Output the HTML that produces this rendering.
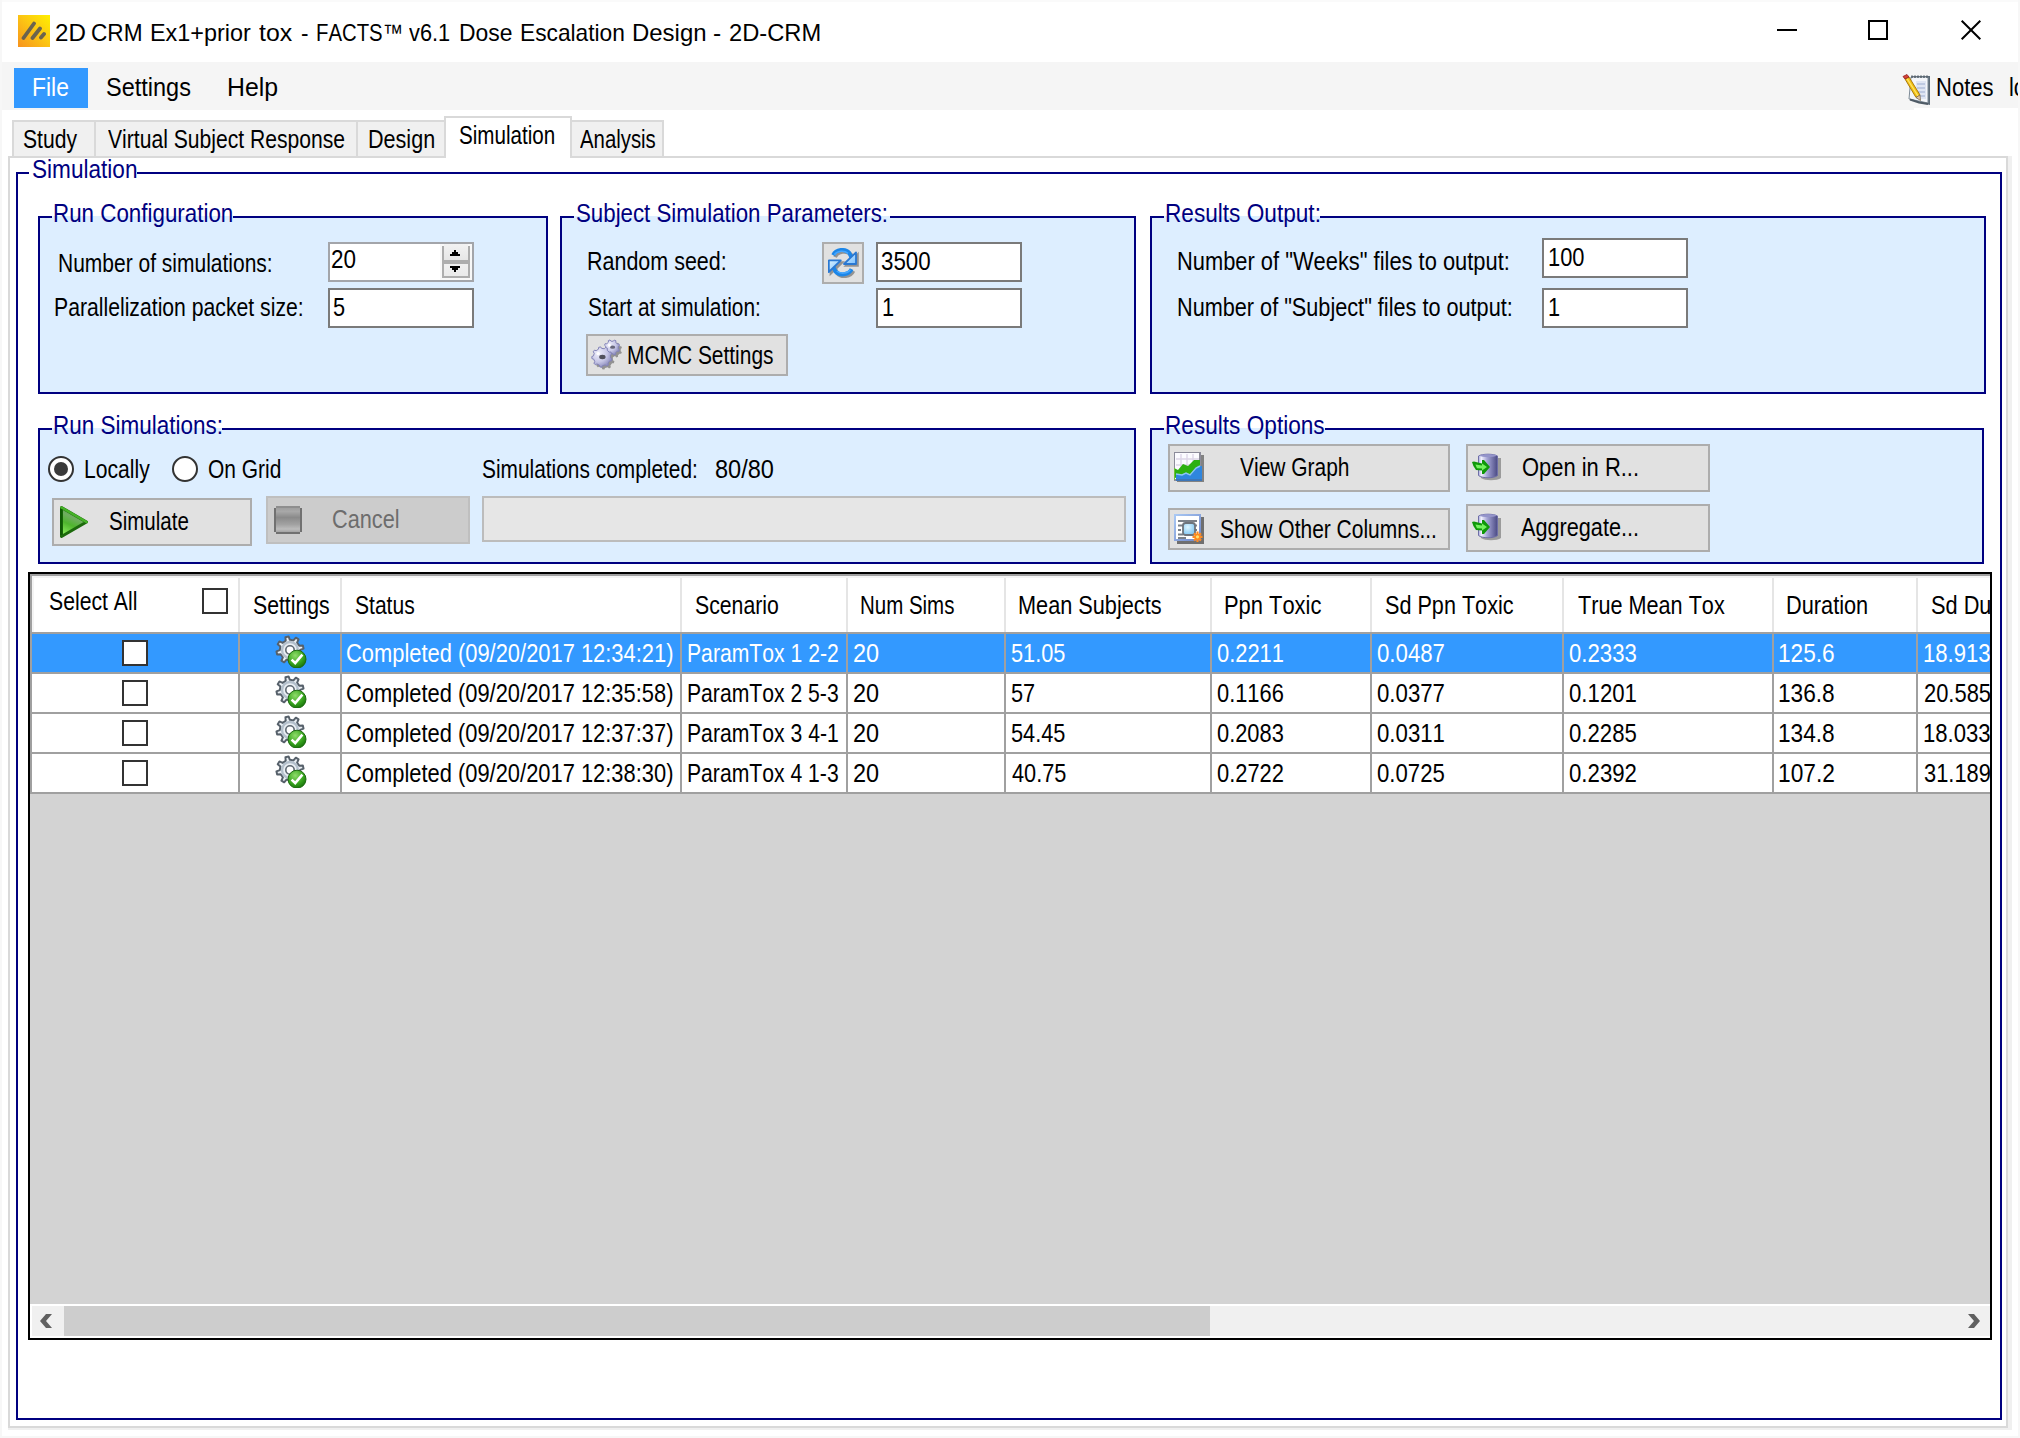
<!DOCTYPE html>
<html lang="en"><head><meta charset="utf-8"><title>2D CRM Ex1+prior tox - FACTS v6.1 Dose Escalation Design - 2D-CRM</title>
<style>
html,body{margin:0;padding:0;background:#fff;}
body{width:2020px;height:1438px;overflow:hidden;}
#win{position:relative;width:2020px;height:1438px;overflow:hidden;background:#fff;font-family:"Liberation Sans",sans-serif;}
#win div,#win span,#win svg{position:absolute;box-sizing:border-box;}
.t{white-space:pre;font:25px/28px "Liberation Sans",sans-serif;color:#000;transform-origin:0 0;font-kerning:none;}
.grp{border:2px solid #000080;background:#ddeeff;}
.gap{height:2px;background:#ddeeff;}
.tb{border:2px solid #7a7a7a;background:#fff;}
.btn{border:2px solid #adadad;background:#e1e1e1;}
.tab{border:2px solid #d9d9d9;border-bottom:none;background:#f0f0f0;}
.vl{width:2px;background:#a0a0a0;}
.hl{height:2px;background:#a0a0a0;}
.hvl{width:2px;background:#e5e5e5;}
.cb{width:26px;height:26px;border:2px solid #333;background:#fff;}
.rad{width:26px;height:26px;border:2px solid #333;border-radius:50%;background:#fff;}

</style></head>
<body>
<div id="win">
<div style="left:0px;top:0px;width:2020px;height:2px;background:#fafafa"></div>
<div style="left:0px;top:0px;width:2px;height:1438px;background:#f7f7f7"></div>
<div style="left:2018px;top:0px;width:2px;height:1438px;background:#f7f7f7"></div>
<div style="left:0px;top:1436px;width:2020px;height:2px;background:#f7f7f7"></div>
<svg style="left:18px;top:15px" width="32" height="32" viewBox="0 0 32 32"><defs><linearGradient id="ga" x1="1" y1="0" x2="0" y2="1"><stop offset="0" stop-color="#fff000"/><stop offset="0.45" stop-color="#fcc812"/><stop offset="1" stop-color="#f7931e"/></linearGradient></defs><rect width="32" height="32" fill="url(#ga)"/><g stroke="#5c5a55" stroke-width="3.8" stroke-linecap="round" opacity="0.9"><path d="M5.5 23 L16 8.5"/><path d="M14.5 23 L22 13.5"/><path d="M23 22.5 L26 19"/></g></svg>
<div style="left:1777px;top:29px;width:20px;height:2px;background:#000"></div>
<div style="left:1868px;top:20px;width:20px;height:20px;border:2px solid #000"></div>
<svg style="left:1959px;top:18px" width="24" height="24" viewBox="0 0 24 24"><path d="M2.7 2.7 L21.3 21.3 M21.3 2.7 L2.7 21.3" stroke="#000" stroke-width="2" fill="none"/></svg>
<div style="left:2px;top:62px;width:2016px;height:48px;background:#f5f5f5"></div>
<div style="left:1914px;top:108px;width:104px;height:2px;background:#fff"></div>
<div style="left:14px;top:68px;width:74px;height:40px;background:#3399ff"></div>
<svg style="left:1901px;top:74px" width="32" height="32" viewBox="0 0 32 32"><path d="M11 2 H29 V31 L9 26 Z" fill="#5d6b78"/><path d="M10 3 H27 V29 L8 25 Z" fill="#f4f6fa" stroke="#7d8a96" stroke-width="1"/><path d="M11 1.5 V4 M14 1.5 V4 M17 1.5 V4 M20 1.5 V4 M23 1.5 V4 M26 1.5 V4" stroke="#59636d" stroke-width="1.6"/><rect x="15" y="7" width="10" height="18" fill="#dfe5f3"/><path d="M16 10 H24 M16 14 H24 M16 18 H24 M16 22 H24" stroke="#b4c0dc" stroke-width="1.4"/><path d="M4 5 L8 3 L19 21 L15 23.5 Z" fill="#f4c20f" stroke="#a97912" stroke-width="1"/><path d="M6 4.5 L17 22" stroke="#fde36a" stroke-width="1.4"/><path d="M15 23.5 L19 21 L19.5 26.5 Z" fill="#e8c9a0" stroke="#7a6a55" stroke-width="0.8"/><path d="M2 2.5 L6 0.5 L8 3 L4 5 Z" fill="#d8423a" stroke="#8e1f1a" stroke-width="0.8"/><path d="M9 25.5 L18 28.5 L27 30" stroke="#4f5b66" stroke-width="2" fill="none"/></svg>
<div style="left:2008px;top:156px;width:4px;height:1274px;background:#f0f0f0"></div>
<div style="left:8px;top:1428px;width:2004px;height:2px;background:#f0f0f0"></div>
<div style="left:8px;top:156px;width:2000px;height:1272px;border:2px solid #d9d9d9;background:#fff"></div>
<div class="tab" style="left:12px;top:120px;width:84px;height:36px;"></div>
<div class="tab" style="left:94px;top:120px;width:264px;height:36px;"></div>
<div class="tab" style="left:356px;top:120px;width:90px;height:36px;"></div>
<div class="tab" style="left:570px;top:120px;width:94px;height:36px;"></div>
<div class="tab" style="left:444px;top:116px;width:128px;height:42px;background:#fff"></div>
<div style="left:16px;top:172px;width:1986px;height:1248px;border:2px solid #000080;background:#fff"></div>
<div style="left:29px;top:172px;width:108px;height:2px;background:#fff"></div>
<div class="grp" style="left:38px;top:216px;width:510px;height:178px;"></div>
<div class="gap" style="left:52px;top:216px;width:181px;height:2px;"></div>
<div class="grp" style="left:560px;top:216px;width:576px;height:178px;"></div>
<div class="gap" style="left:574px;top:216px;width:316px;height:2px;"></div>
<div class="grp" style="left:1150px;top:216px;width:836px;height:178px;"></div>
<div class="gap" style="left:1164px;top:216px;width:156px;height:2px;"></div>
<div class="grp" style="left:38px;top:428px;width:1098px;height:136px;"></div>
<div class="gap" style="left:52px;top:428px;width:170px;height:2px;"></div>
<div class="grp" style="left:1150px;top:428px;width:834px;height:136px;"></div>
<div class="gap" style="left:1164px;top:428px;width:161px;height:2px;"></div>
<div style="left:328px;top:242px;width:146px;height:40px;border:2px solid #a3a5aa;background:#fff"></div>
<div style="left:440px;top:244px;width:32px;height:36px;background:#f8f8f8"></div>
<div style="left:444px;top:244px;width:24px;height:16px;background:linear-gradient(#f2f2f2,#e6e6e6)"></div>
<div style="left:444px;top:264px;width:24px;height:12px;background:linear-gradient(#f0f0f0,#eaeaea)"></div>
<div style="left:442px;top:246px;width:2px;height:32px;background:#adadad"></div>
<div style="left:468px;top:246px;width:2px;height:32px;background:#adadad"></div>
<div style="left:442px;top:260px;width:28px;height:4px;background:#adadad"></div>
<div style="left:442px;top:276px;width:28px;height:2px;background:#adadad"></div>
<div style="left:454px;top:250px;width:2px;height:2px;background:#000"></div>
<div style="left:452px;top:252px;width:6px;height:2px;background:#000"></div>
<div style="left:450px;top:254px;width:10px;height:2px;background:#000"></div>
<div style="left:450px;top:266px;width:10px;height:2px;background:#000"></div>
<div style="left:452px;top:268px;width:6px;height:2px;background:#000"></div>
<div style="left:454px;top:270px;width:2px;height:2px;background:#000"></div>
<div class="tb" style="left:328px;top:288px;width:146px;height:40px;"></div>
<div class="btn" style="left:822px;top:242px;width:42px;height:42px;"></div>
<svg style="left:828px;top:248px" width="32" height="32" viewBox="0 0 16 16"><defs><linearGradient id="gr" x1="0" y1="0" x2="1" y2="1"><stop offset="0" stop-color="#d6f0ff"/><stop offset="1" stop-color="#7cc0ff"/></linearGradient></defs><g opacity="0.55" fill="#555" stroke="#555" transform="translate(0.9,0.9)"><path d="M14 2.2 V8 H8 Z"/><path d="M2.6 3.6 C4 0.6 8.6 0.2 10.6 2.4 L11.8 4.8" fill="none" stroke-width="1.9"/><path d="M0.4 12 V6.2 H6.4 Z"/><path d="M11.8 10.6 C10.4 13.6 5.8 14 3.8 11.8 L2.6 9.4" fill="none" stroke-width="1.9"/></g><path d="M2.6 3.6 C4 0.6 8.6 0.2 10.6 2.4 L11.8 4.8" fill="none" stroke="#1c86e8" stroke-width="2"/><path d="M3.2 3.4 C4.6 1.3 8.2 1.1 10 2.7" fill="none" stroke="#44a6ff" stroke-width="0.8"/><path d="M14 2.2 V8 H8 Z" fill="url(#gr)" stroke="#2a78d2" stroke-width="0.9" stroke-linejoin="round"/><path d="M11.8 10.6 C10.4 13.6 5.8 14 3.8 11.8 L2.6 9.4" fill="none" stroke="#1c86e8" stroke-width="2"/><path d="M11.2 10.8 C9.8 12.9 6.2 13.1 4.4 11.5" fill="none" stroke="#44a6ff" stroke-width="0.8"/><path d="M0.4 12 V6.2 H6.4 Z" fill="url(#gr)" stroke="#2a78d2" stroke-width="0.9" stroke-linejoin="round"/></svg>
<div class="tb" style="left:876px;top:242px;width:146px;height:40px;"></div>
<div class="tb" style="left:876px;top:288px;width:146px;height:40px;"></div>
<div class="btn" style="left:586px;top:334px;width:202px;height:42px;"></div>
<svg style="left:590px;top:338px" width="34" height="34" viewBox="0 0 34 34"><defs><radialGradient id="gq" cx="0.32" cy="0.3" r="0.8"><stop offset="0" stop-color="#f0f0fb"/><stop offset="0.55" stop-color="#c6c6e6"/><stop offset="1" stop-color="#7f7fb4"/></radialGradient></defs><g opacity="0.45" fill="#333" transform="translate(2.4,2.4)"><path d="M28.27 10.77 L29.46 11.76 L28.73 13.44 L27.19 13.24 L25.54 14.83 L25.68 16.38 L23.97 17.05 L23.03 15.82 L20.73 15.77 L19.74 16.96 L18.06 16.23 L18.26 14.69 L16.67 13.04 L15.12 13.18 L14.45 11.47 L15.68 10.53 L15.73 8.23 L14.54 7.24 L15.27 5.56 L16.81 5.76 L18.46 4.17 L18.32 2.62 L20.03 1.95 L20.97 3.18 L23.27 3.23 L24.26 2.04 L25.94 2.77 L25.74 4.31 L27.33 5.96 L28.88 5.82 L29.55 7.53 L28.32 8.47 Z"/><path d="M20.56 19.86 L22.03 20.86 L21.42 22.91 L19.64 22.95 L18.00 25.16 L18.48 26.87 L16.71 28.05 L15.31 26.94 L12.64 27.58 L11.91 29.20 L9.79 28.96 L9.44 27.21 L6.98 25.98 L5.37 26.75 L3.90 25.21 L4.76 23.64 L3.67 21.12 L1.94 20.68 L1.81 18.55 L3.47 17.90 L4.25 15.27 L3.21 13.82 L4.48 12.11 L6.17 12.68 L8.47 11.16 L8.60 9.38 L10.67 8.89 L11.60 10.41 L14.33 10.72 L15.58 9.45 L17.48 10.40 L17.22 12.16 L19.11 14.16 L20.88 13.98 L21.73 15.94 L20.39 17.11 Z"/></g><path d="M28.27 10.77 L29.46 11.76 L28.73 13.44 L27.19 13.24 L25.54 14.83 L25.68 16.38 L23.97 17.05 L23.03 15.82 L20.73 15.77 L19.74 16.96 L18.06 16.23 L18.26 14.69 L16.67 13.04 L15.12 13.18 L14.45 11.47 L15.68 10.53 L15.73 8.23 L14.54 7.24 L15.27 5.56 L16.81 5.76 L18.46 4.17 L18.32 2.62 L20.03 1.95 L20.97 3.18 L23.27 3.23 L24.26 2.04 L25.94 2.77 L25.74 4.31 L27.33 5.96 L28.88 5.82 L29.55 7.53 L28.32 8.47 Z" fill="url(#gq)" stroke="#8484b8" stroke-width="1"/><ellipse cx="22.6" cy="9.2" rx="2.6" ry="1.6" fill="#66667a"/><circle cx="19.4" cy="7.4" r="1.4" fill="#fff" opacity="0.95"/><path d="M20.56 19.86 L22.03 20.86 L21.42 22.91 L19.64 22.95 L18.00 25.16 L18.48 26.87 L16.71 28.05 L15.31 26.94 L12.64 27.58 L11.91 29.20 L9.79 28.96 L9.44 27.21 L6.98 25.98 L5.37 26.75 L3.90 25.21 L4.76 23.64 L3.67 21.12 L1.94 20.68 L1.81 18.55 L3.47 17.90 L4.25 15.27 L3.21 13.82 L4.48 12.11 L6.17 12.68 L8.47 11.16 L8.60 9.38 L10.67 8.89 L11.60 10.41 L14.33 10.72 L15.58 9.45 L17.48 10.40 L17.22 12.16 L19.11 14.16 L20.88 13.98 L21.73 15.94 L20.39 17.11 Z" fill="url(#gq)" stroke="#8484b8" stroke-width="1"/><ellipse cx="12.4" cy="19" rx="3.2" ry="2.2" fill="#50505c"/><circle cx="8.2" cy="15.6" r="1.7" fill="#fff" opacity="0.95"/></svg>
<div class="tb" style="left:1542px;top:238px;width:146px;height:40px;"></div>
<div class="tb" style="left:1542px;top:288px;width:146px;height:40px;"></div>
<div class="rad" style="left:48px;top:456px;width:26px;height:26px;"></div>
<div style="left:54px;top:462px;width:14px;height:14px;border-radius:50%;background:#3a3a3a"></div>
<div class="rad" style="left:172px;top:456px;width:26px;height:26px;"></div>
<div class="btn" style="left:52px;top:498px;width:200px;height:48px;"></div>
<svg style="left:58px;top:504px" width="32" height="36" viewBox="0 0 32 36"><defs><linearGradient id="gp" x1="0.6" y1="0" x2="0.2" y2="1"><stop offset="0" stop-color="#5e9a52"/><stop offset="0.35" stop-color="#6fae60"/><stop offset="0.6" stop-color="#4fb52e"/><stop offset="1" stop-color="#8ff060"/></linearGradient></defs><path d="M3.5 3.5 L28.5 18 L3.5 32.5 Z" fill="url(#gp)" stroke="#1c6a0c" stroke-width="3" stroke-linejoin="round"/><path d="M3.5 3.5 L28.5 18" stroke="#46b228" stroke-width="2.6" stroke-linecap="round"/><path d="M3.2 5 V31" stroke="#0f5a04" stroke-width="2.2"/></svg>
<div style="left:266px;top:496px;width:204px;height:48px;background:#cccccc;border:2px solid #bfbfbf"></div>
<svg style="left:274px;top:506px" width="28" height="28" viewBox="0 0 28 28"><defs><linearGradient id="gs" x1="0" y1="0" x2="0" y2="1"><stop offset="0" stop-color="#9c9c9c"/><stop offset="0.18" stop-color="#a8a8a8"/><stop offset="0.42" stop-color="#8a8a8a"/><stop offset="0.7" stop-color="#a2a2a2"/><stop offset="0.88" stop-color="#bcbcbc"/><stop offset="1" stop-color="#a4a4a4"/></linearGradient></defs><path d="M2 0 H26 V2 H28 V26 H26 V28 H2 V26 H0 V2 H2 Z" fill="#717171"/><rect x="2" y="1" width="24" height="25" fill="url(#gs)"/><rect x="2" y="0" width="24" height="2" fill="#8e8e8e"/></svg>
<div style="left:482px;top:496px;width:644px;height:46px;background:#e6e6e6;border:2px solid #bcbcbc"></div>
<div class="btn" style="left:1168px;top:444px;width:282px;height:48px;"></div>
<div class="btn" style="left:1466px;top:444px;width:244px;height:48px;"></div>
<div class="btn" style="left:1168px;top:508px;width:282px;height:42px;"></div>
<div class="btn" style="left:1466px;top:504px;width:244px;height:48px;"></div>
<svg style="left:1174px;top:452px" width="32" height="32" viewBox="0 0 32 32"><rect x="3" y="3" width="27" height="27" fill="#6a6a6a" opacity="0.8"/><rect x="0" y="0" width="26" height="28" fill="#fbfbff" stroke="#8c8c9a" stroke-width="2"/><path d="M7 2 V20 M13 2 V20 M19 2 V20 M2 7 H25 M2 13 H25" stroke="#ddd6e8" stroke-width="1.4"/><path d="M0 16 L4 18 L9 12 L14 14 L20 8 L26 8 L26 14 L18 24 L0 26 Z" fill="#2cb010"/><path d="M2 22 L8 23 L12 21 L16 23 L22 16 L26 14 L28 14 L28 28 L2 28 Z" fill="#2f86de"/><path d="M2 22 L8 23 L12 21 L16 23 L22 16 L26 14" stroke="#8cc4f6" stroke-width="1.4" fill="none"/><path d="M0 16 V28" stroke="#6fbf3a" stroke-width="2"/><path d="M2 28 H28" stroke="#3d76b8" stroke-width="2"/></svg>
<svg style="left:1470px;top:452px" width="32" height="30" viewBox="0 0 32 30"><defs><linearGradient id="gd1" x1="0" y1="0" x2="1" y2="0"><stop offset="0" stop-color="#a8a8d8"/><stop offset="0.15" stop-color="#f2f2fe"/><stop offset="0.45" stop-color="#a6a6d6"/><stop offset="1" stop-color="#4a4a84"/></linearGradient></defs><path d="M11 6 H31 V26 C27 29 15 29 11 26 Z" fill="#555" opacity="0.5"/><path d="M8.5 4 C12 1.6 24 1.6 27.5 4 V23.5 C24 26.5 12 26.5 8.5 23.5 Z" fill="url(#gd1)" stroke="#6e6ea6" stroke-width="1"/><path d="M9 3.7 C13 1.9 23 1.9 27 3.7 C23 5.6 13 5.6 9 3.7 Z" fill="#9494ca"/><path d="M2 10 L4 9.6 L12 11.6 V8 H14 L20 15 L14 22 H12 V18.6 L6 18 L3.4 14 Z" fill="#10980a"/><path d="M5.4 12.6 L12 13.6 V11.4 L17 15 L12 18.6 V16.6 L7 16.2 Z" fill="#74f25e"/></svg>
<svg style="left:1470px;top:512px" width="32" height="30" viewBox="0 0 32 30"><defs><linearGradient id="gd2" x1="0" y1="0" x2="1" y2="0"><stop offset="0" stop-color="#a8a8d8"/><stop offset="0.15" stop-color="#f2f2fe"/><stop offset="0.45" stop-color="#a6a6d6"/><stop offset="1" stop-color="#4a4a84"/></linearGradient></defs><path d="M11 6 H31 V26 C27 29 15 29 11 26 Z" fill="#555" opacity="0.5"/><path d="M8.5 4 C12 1.6 24 1.6 27.5 4 V23.5 C24 26.5 12 26.5 8.5 23.5 Z" fill="url(#gd2)" stroke="#6e6ea6" stroke-width="1"/><path d="M9 3.7 C13 1.9 23 1.9 27 3.7 C23 5.6 13 5.6 9 3.7 Z" fill="#9494ca"/><path d="M2 10 L4 9.6 L12 11.6 V8 H14 L20 15 L14 22 H12 V18.6 L6 18 L3.4 14 Z" fill="#10980a"/><path d="M5.4 12.6 L12 13.6 V11.4 L17 15 L12 18.6 V16.6 L7 16.2 Z" fill="#74f25e"/></svg>
<svg style="left:1174px;top:514px" width="32" height="32" viewBox="0 0 32 32"><defs><linearGradient id="gc" x1="0" y1="0" x2="1" y2="1"><stop offset="0" stop-color="#a9c8f4"/><stop offset="1" stop-color="#6d86c8"/></linearGradient><radialGradient id="gl" cx="0.4" cy="0.35" r="0.7"><stop offset="0" stop-color="#dff6ff"/><stop offset="1" stop-color="#7cc4f2"/></radialGradient></defs><rect x="3" y="3" width="27" height="27" fill="#5a5a5a" opacity="0.85"/><rect x="1" y="1" width="25" height="25" fill="#fff" stroke="url(#gc)" stroke-width="2"/><path d="M4 7 H23 M4 11.5 H9 M20 11.5 H23 M4 16 H7 M21 16 H23 M4 20.5 H9 M4 24 H12" stroke="#7a8088" stroke-width="1.8"/><rect x="9" y="9" width="12" height="12" rx="2.5" fill="url(#gl)" stroke="#6e747c" stroke-width="1.8"/><path d="M23.5 17.5 V28 M18.5 22.8 H28.5 M20 19.2 L27 26.4 M27 19.2 L20 26.4" stroke="#ff8a1e" stroke-width="2.2"/><circle cx="23.5" cy="22.8" r="1.6" fill="#ffe070"/></svg>
<div style="left:28px;top:572px;width:1964px;height:768px;border:2px solid #000;background:#d3d3d3"></div>
<div style="left:30px;top:574px;width:1960px;height:2px;background:#a0a0a0"></div>
<div style="left:30px;top:574px;width:2px;height:220px;background:#a0a0a0"></div>
<div style="left:32px;top:576px;width:1958px;height:56px;background:#fff;border-top:2px solid #f4f4f4;border-left:2px solid #f4f4f4"></div>
<div style="left:32px;top:634px;width:1958px;height:38px;background:#3399ff"></div>
<div style="left:32px;top:674px;width:1958px;height:118px;background:#fff"></div>
<div class="hl" style="left:32px;top:632px;width:1958px;height:2px;"></div>
<div class="hl" style="left:32px;top:672px;width:1958px;height:2px;"></div>
<div class="hl" style="left:32px;top:712px;width:1958px;height:2px;"></div>
<div class="hl" style="left:32px;top:752px;width:1958px;height:2px;"></div>
<div class="hl" style="left:32px;top:792px;width:1958px;height:2px;"></div>
<div class="hvl" style="left:238px;top:578px;width:2px;height:54px;"></div>
<div class="vl" style="left:238px;top:632px;width:2px;height:162px;"></div>
<div class="hvl" style="left:340px;top:578px;width:2px;height:54px;"></div>
<div class="vl" style="left:340px;top:632px;width:2px;height:162px;"></div>
<div class="hvl" style="left:680px;top:578px;width:2px;height:54px;"></div>
<div class="vl" style="left:680px;top:632px;width:2px;height:162px;"></div>
<div class="hvl" style="left:846px;top:578px;width:2px;height:54px;"></div>
<div class="vl" style="left:846px;top:632px;width:2px;height:162px;"></div>
<div class="hvl" style="left:1004px;top:578px;width:2px;height:54px;"></div>
<div class="vl" style="left:1004px;top:632px;width:2px;height:162px;"></div>
<div class="hvl" style="left:1210px;top:578px;width:2px;height:54px;"></div>
<div class="vl" style="left:1210px;top:632px;width:2px;height:162px;"></div>
<div class="hvl" style="left:1370px;top:578px;width:2px;height:54px;"></div>
<div class="vl" style="left:1370px;top:632px;width:2px;height:162px;"></div>
<div class="hvl" style="left:1562px;top:578px;width:2px;height:54px;"></div>
<div class="vl" style="left:1562px;top:632px;width:2px;height:162px;"></div>
<div class="hvl" style="left:1772px;top:578px;width:2px;height:54px;"></div>
<div class="vl" style="left:1772px;top:632px;width:2px;height:162px;"></div>
<div class="hvl" style="left:1916px;top:578px;width:2px;height:54px;"></div>
<div class="vl" style="left:1916px;top:632px;width:2px;height:162px;"></div>
<div class="cb" style="left:202px;top:588px;width:26px;height:26px;"></div>
<div class="cb" style="left:122px;top:640px;width:26px;height:26px;"></div>
<svg style="left:272px;top:632px" width="36" height="36" viewBox="0 0 36 36"><defs><radialGradient id="gg0" cx="0.4" cy="0.3" r="0.75"><stop offset="0" stop-color="#8fdc6a"/><stop offset="0.6" stop-color="#38a51e"/><stop offset="1" stop-color="#146c08"/></radialGradient></defs><path d="M27.58 21.50 L30.28 23.84 L28.58 26.55 L25.29 25.13 L22.30 27.25 L22.55 30.82 L19.43 31.52 L18.12 28.20 L14.50 27.58 L12.16 30.28 L9.45 28.58 L10.87 25.29 L8.75 22.30 L5.18 22.55 L4.48 19.43 L7.80 18.12 L8.42 14.50 L5.72 12.16 L7.42 9.45 L10.71 10.87 L13.70 8.75 L13.45 5.18 L16.57 4.48 L17.88 7.80 L21.50 8.42 L23.84 5.72 L26.55 7.42 L25.13 10.71 L27.25 13.70 L30.82 13.45 L31.52 16.57 L28.20 17.88 Z" fill="#e9eef3" stroke="#56606a" stroke-width="2" stroke-linejoin="round"/><circle cx="18" cy="18" r="8" fill="none" stroke="#b4c0cc" stroke-width="2.4"/><circle cx="18" cy="18" r="4.2" fill="#fff" stroke="#5e6872" stroke-width="1.6"/><circle cx="25" cy="27.2" r="9" fill="url(#gg0)" stroke="#1d6a10" stroke-width="1"/><path d="M19.6 27.6 L23.2 31 L30.4 22.6" stroke="#fff" stroke-width="2.6" fill="none"/></svg>
<div class="cb" style="left:122px;top:680px;width:26px;height:26px;"></div>
<svg style="left:272px;top:672px" width="36" height="36" viewBox="0 0 36 36"><defs><radialGradient id="gg1" cx="0.4" cy="0.3" r="0.75"><stop offset="0" stop-color="#8fdc6a"/><stop offset="0.6" stop-color="#38a51e"/><stop offset="1" stop-color="#146c08"/></radialGradient></defs><path d="M27.58 21.50 L30.28 23.84 L28.58 26.55 L25.29 25.13 L22.30 27.25 L22.55 30.82 L19.43 31.52 L18.12 28.20 L14.50 27.58 L12.16 30.28 L9.45 28.58 L10.87 25.29 L8.75 22.30 L5.18 22.55 L4.48 19.43 L7.80 18.12 L8.42 14.50 L5.72 12.16 L7.42 9.45 L10.71 10.87 L13.70 8.75 L13.45 5.18 L16.57 4.48 L17.88 7.80 L21.50 8.42 L23.84 5.72 L26.55 7.42 L25.13 10.71 L27.25 13.70 L30.82 13.45 L31.52 16.57 L28.20 17.88 Z" fill="#e9eef3" stroke="#56606a" stroke-width="2" stroke-linejoin="round"/><circle cx="18" cy="18" r="8" fill="none" stroke="#b4c0cc" stroke-width="2.4"/><circle cx="18" cy="18" r="4.2" fill="#fff" stroke="#5e6872" stroke-width="1.6"/><circle cx="25" cy="27.2" r="9" fill="url(#gg1)" stroke="#1d6a10" stroke-width="1"/><path d="M19.6 27.6 L23.2 31 L30.4 22.6" stroke="#fff" stroke-width="2.6" fill="none"/></svg>
<div class="cb" style="left:122px;top:720px;width:26px;height:26px;"></div>
<svg style="left:272px;top:712px" width="36" height="36" viewBox="0 0 36 36"><defs><radialGradient id="gg2" cx="0.4" cy="0.3" r="0.75"><stop offset="0" stop-color="#8fdc6a"/><stop offset="0.6" stop-color="#38a51e"/><stop offset="1" stop-color="#146c08"/></radialGradient></defs><path d="M27.58 21.50 L30.28 23.84 L28.58 26.55 L25.29 25.13 L22.30 27.25 L22.55 30.82 L19.43 31.52 L18.12 28.20 L14.50 27.58 L12.16 30.28 L9.45 28.58 L10.87 25.29 L8.75 22.30 L5.18 22.55 L4.48 19.43 L7.80 18.12 L8.42 14.50 L5.72 12.16 L7.42 9.45 L10.71 10.87 L13.70 8.75 L13.45 5.18 L16.57 4.48 L17.88 7.80 L21.50 8.42 L23.84 5.72 L26.55 7.42 L25.13 10.71 L27.25 13.70 L30.82 13.45 L31.52 16.57 L28.20 17.88 Z" fill="#e9eef3" stroke="#56606a" stroke-width="2" stroke-linejoin="round"/><circle cx="18" cy="18" r="8" fill="none" stroke="#b4c0cc" stroke-width="2.4"/><circle cx="18" cy="18" r="4.2" fill="#fff" stroke="#5e6872" stroke-width="1.6"/><circle cx="25" cy="27.2" r="9" fill="url(#gg2)" stroke="#1d6a10" stroke-width="1"/><path d="M19.6 27.6 L23.2 31 L30.4 22.6" stroke="#fff" stroke-width="2.6" fill="none"/></svg>
<div class="cb" style="left:122px;top:760px;width:26px;height:26px;"></div>
<svg style="left:272px;top:752px" width="36" height="36" viewBox="0 0 36 36"><defs><radialGradient id="gg3" cx="0.4" cy="0.3" r="0.75"><stop offset="0" stop-color="#8fdc6a"/><stop offset="0.6" stop-color="#38a51e"/><stop offset="1" stop-color="#146c08"/></radialGradient></defs><path d="M27.58 21.50 L30.28 23.84 L28.58 26.55 L25.29 25.13 L22.30 27.25 L22.55 30.82 L19.43 31.52 L18.12 28.20 L14.50 27.58 L12.16 30.28 L9.45 28.58 L10.87 25.29 L8.75 22.30 L5.18 22.55 L4.48 19.43 L7.80 18.12 L8.42 14.50 L5.72 12.16 L7.42 9.45 L10.71 10.87 L13.70 8.75 L13.45 5.18 L16.57 4.48 L17.88 7.80 L21.50 8.42 L23.84 5.72 L26.55 7.42 L25.13 10.71 L27.25 13.70 L30.82 13.45 L31.52 16.57 L28.20 17.88 Z" fill="#e9eef3" stroke="#56606a" stroke-width="2" stroke-linejoin="round"/><circle cx="18" cy="18" r="8" fill="none" stroke="#b4c0cc" stroke-width="2.4"/><circle cx="18" cy="18" r="4.2" fill="#fff" stroke="#5e6872" stroke-width="1.6"/><circle cx="25" cy="27.2" r="9" fill="url(#gg3)" stroke="#1d6a10" stroke-width="1"/><path d="M19.6 27.6 L23.2 31 L30.4 22.6" stroke="#fff" stroke-width="2.6" fill="none"/></svg>
<div style="left:30px;top:1304px;width:1960px;height:34px;background:#fff"></div>
<div style="left:32px;top:1306px;width:1958px;height:30px;background:#f0f0f0"></div>
<div style="left:64px;top:1306px;width:1146px;height:30px;background:#cdcdcd"></div>
<svg style="left:40px;top:1314px" width="12" height="14" viewBox="0 0 12 14"><path d="M12 0 H6 L0 7 L6 14 H12 L6 7 Z" fill="#606060"/></svg>
<svg style="left:1968px;top:1314px" width="12" height="14" viewBox="0 0 12 14"><path d="M0 0 H6 L12 7 L6 14 H0 L6 7 Z" fill="#606060"/></svg>
<!-- text -->
<span class="t" style="left:54.79px;top:19px;font-size:24px;line-height:27px;transform:scaleX(1.0059);">2D</span>
<span class="t" style="left:91.35px;top:19px;font-size:24px;line-height:27px;transform:scaleX(0.9423);">CRM</span>
<span class="t" style="left:150.08px;top:19px;font-size:24px;line-height:27px;transform:scaleX(0.9750);">Ex1+prior</span>
<span class="t" style="left:258.62px;top:19px;font-size:24px;line-height:27px;transform:scaleX(1.0352);">tox</span>
<span class="t" style="left:300.50px;top:19px;font-size:24px;line-height:27px;transform:scaleX(0.9374);">-</span>
<span class="t" style="left:315.83px;top:19px;font-size:24px;line-height:27px;transform:scaleX(0.8470);">FACTS™</span>
<span class="t" style="left:408.93px;top:19px;font-size:24px;line-height:27px;transform:scaleX(0.9066);">v6.1</span>
<span class="t" style="left:459.12px;top:19px;font-size:24px;line-height:27px;transform:scaleX(0.9529);">Dose</span>
<span class="t" style="left:520.14px;top:19px;font-size:24px;line-height:27px;transform:scaleX(0.9468);">Escalation</span>
<span class="t" style="left:631.54px;top:19px;font-size:24px;line-height:27px;transform:scaleX(0.9973);">Design</span>
<span class="t" style="left:713.41px;top:19px;font-size:24px;line-height:27px;transform:scaleX(1.0226);">-</span>
<span class="t" style="left:729.31px;top:19px;font-size:24px;line-height:27px;transform:scaleX(0.9872);">2D-CRM</span>
<span class="t" style="left:32.12px;top:73px;color:#fff;transform:scaleX(0.9156);">File</span>
<span class="t" style="left:105.93px;top:73px;transform:scaleX(0.9399);">Settings</span>
<span class="t" style="left:226.96px;top:73px;transform:scaleX(0.9934);">Help</span>
<span class="t" style="left:1936.19px;top:73px;transform:scaleX(0.8820);">Notes</span>
<span class="t" style="left:23.04px;top:125px;transform:scaleX(0.8446);">Study</span>
<span class="t" style="left:107.91px;top:125px;transform:scaleX(0.8444);">Virtual Subject Response</span>
<span class="t" style="left:368.23px;top:125px;transform:scaleX(0.8631);">Design</span>
<span class="t" style="left:459.06px;top:121px;transform:scaleX(0.8247);">Simulation</span>
<span class="t" style="left:579.96px;top:125px;transform:scaleX(0.8140);">Analysis</span>
<span class="t" style="left:31.97px;top:155px;color:#000080;transform:scaleX(0.9037);">Simulation</span>
<span class="t" style="left:53.17px;top:199px;color:#000080;transform:scaleX(0.8947);">Run Configuration</span>
<span class="t" style="left:575.99px;top:199px;color:#000080;transform:scaleX(0.8911);">Subject Simulation Parameters:</span>
<span class="t" style="left:1165.14px;top:199px;color:#000080;transform:scaleX(0.9049);">Results Output:</span>
<span class="t" style="left:53.16px;top:411px;color:#000080;transform:scaleX(0.8990);">Run Simulations:</span>
<span class="t" style="left:1165.14px;top:411px;color:#000080;transform:scaleX(0.9048);">Results Options</span>
<span class="t" style="left:58.28px;top:249px;transform:scaleX(0.8396);">Number of simulations:</span>
<span class="t" style="left:54.26px;top:293px;transform:scaleX(0.8475);">Parallelization packet size:</span>
<span class="t" style="left:330.87px;top:245px;transform:scaleX(0.8992);">20</span>
<span class="t" style="left:333.13px;top:293px;transform:scaleX(0.8700);">5</span>
<span class="t" style="left:587.24px;top:247px;transform:scaleX(0.8593);">Random seed:</span>
<span class="t" style="left:588.05px;top:293px;transform:scaleX(0.8349);">Start at simulation:</span>
<span class="t" style="left:881.15px;top:247px;transform:scaleX(0.8939);">3500</span>
<span class="t" style="left:882.34px;top:293px;transform:scaleX(0.8700);">1</span>
<span class="t" style="left:627.28px;top:341px;transform:scaleX(0.8368);">MCMC Settings</span>
<span class="t" style="left:1177.21px;top:247px;transform:scaleX(0.8748);">Number of "Weeks" files to output:</span>
<span class="t" style="left:1177.22px;top:293px;transform:scaleX(0.8667);">Number of "Subject" files to output:</span>
<span class="t" style="left:1548.33px;top:243px;transform:scaleX(0.8754);">100</span>
<span class="t" style="left:1548.34px;top:293px;transform:scaleX(0.8700);">1</span>
<span class="t" style="left:84.27px;top:455px;transform:scaleX(0.8451);">Locally</span>
<span class="t" style="left:208.01px;top:455px;transform:scaleX(0.8379);">On Grid</span>
<span class="t" style="left:482.05px;top:455px;transform:scaleX(0.8351);">Simulations completed:</span>
<span class="t" style="left:714.98px;top:455px;transform:scaleX(0.9422);">80/80</span>
<span class="t" style="left:109.07px;top:507px;transform:scaleX(0.8209);">Simulate</span>
<span class="t" style="left:331.90px;top:505px;color:#6d6d6d;transform:scaleX(0.8680);">Cancel</span>
<span class="t" style="left:1239.91px;top:453px;transform:scaleX(0.8379);">View Graph</span>
<span class="t" style="left:1521.96px;top:453px;transform:scaleX(0.8773);">Open in R...</span>
<span class="t" style="left:1220.05px;top:515px;transform:scaleX(0.8392);">Show Other Columns...</span>
<span class="t" style="left:1520.96px;top:513px;transform:scaleX(0.8664);">Aggregate...</span>
<span class="t" style="left:49.04px;top:587px;transform:scaleX(0.8480);">Select All</span>
<span class="t" style="left:253.04px;top:591px;transform:scaleX(0.8493);">Settings</span>
<span class="t" style="left:355.04px;top:591px;transform:scaleX(0.8426);">Status</span>
<span class="t" style="left:695.04px;top:591px;transform:scaleX(0.8499);">Scenario</span>
<span class="t" style="left:860.32px;top:591px;transform:scaleX(0.8189);">Num Sims</span>
<span class="t" style="left:1018.22px;top:591px;transform:scaleX(0.8681);">Mean Subjects</span>
<span class="t" style="left:1224.20px;top:591px;transform:scaleX(0.8759);">Ppn Toxic</span>
<span class="t" style="left:1385.02px;top:591px;transform:scaleX(0.8646);">Sd Ppn Toxic</span>
<span class="t" style="left:1577.51px;top:591px;transform:scaleX(0.8655);">True Mean Tox</span>
<span class="t" style="left:1786.22px;top:591px;transform:scaleX(0.8698);">Duration</span>
<span class="t" style="left:345.89px;top:639px;color:#fff;transform:scaleX(0.8758);">Completed (09/20/2017 12:34:21)</span>
<span class="t" style="left:687.26px;top:639px;color:#fff;transform:scaleX(0.8469);">ParamTox 1 2-2</span>
<span class="t" style="left:852.82px;top:639px;color:#fff;transform:scaleX(0.9383);">20</span>
<span class="t" style="left:1011.13px;top:639px;color:#fff;transform:scaleX(0.8700);">51.05</span>
<span class="t" style="left:1217.15px;top:639px;color:#fff;transform:scaleX(0.8752);">0.2211</span>
<span class="t" style="left:1377.13px;top:639px;color:#fff;transform:scaleX(0.8891);">0.0487</span>
<span class="t" style="left:1569.13px;top:639px;color:#fff;transform:scaleX(0.8872);">0.2333</span>
<span class="t" style="left:1778.27px;top:639px;color:#fff;transform:scaleX(0.9067);">125.6</span>
<span class="t" style="left:345.89px;top:679px;transform:scaleX(0.8758);">Completed (09/20/2017 12:35:58)</span>
<span class="t" style="left:687.26px;top:679px;transform:scaleX(0.8461);">ParamTox 2 5-3</span>
<span class="t" style="left:852.82px;top:679px;transform:scaleX(0.9383);">20</span>
<span class="t" style="left:1011.13px;top:679px;transform:scaleX(0.8700);">57</span>
<span class="t" style="left:1217.15px;top:679px;transform:scaleX(0.8737);">0.1166</span>
<span class="t" style="left:1377.13px;top:679px;transform:scaleX(0.8891);">0.0377</span>
<span class="t" style="left:1569.13px;top:679px;transform:scaleX(0.8886);">0.1201</span>
<span class="t" style="left:1778.27px;top:679px;transform:scaleX(0.9065);">136.8</span>
<span class="t" style="left:345.89px;top:719px;transform:scaleX(0.8758);">Completed (09/20/2017 12:37:37)</span>
<span class="t" style="left:687.26px;top:719px;transform:scaleX(0.8467);">ParamTox 3 4-1</span>
<span class="t" style="left:852.82px;top:719px;transform:scaleX(0.9383);">20</span>
<span class="t" style="left:1011.13px;top:719px;transform:scaleX(0.8700);">54.45</span>
<span class="t" style="left:1217.15px;top:719px;transform:scaleX(0.8737);">0.2083</span>
<span class="t" style="left:1377.13px;top:719px;transform:scaleX(0.8886);">0.0311</span>
<span class="t" style="left:1569.13px;top:719px;transform:scaleX(0.8866);">0.2285</span>
<span class="t" style="left:1778.27px;top:719px;transform:scaleX(0.9065);">134.8</span>
<span class="t" style="left:345.89px;top:759px;transform:scaleX(0.8758);">Completed (09/20/2017 12:38:30)</span>
<span class="t" style="left:687.26px;top:759px;transform:scaleX(0.8461);">ParamTox 4 1-3</span>
<span class="t" style="left:852.82px;top:759px;transform:scaleX(0.9383);">20</span>
<span class="t" style="left:1011.50px;top:759px;transform:scaleX(0.8700);">40.75</span>
<span class="t" style="left:1217.14px;top:759px;transform:scaleX(0.8756);">0.2722</span>
<span class="t" style="left:1377.13px;top:759px;transform:scaleX(0.8866);">0.0725</span>
<span class="t" style="left:1569.13px;top:759px;transform:scaleX(0.8891);">0.2392</span>
<span class="t" style="left:1778.27px;top:759px;transform:scaleX(0.9091);">107.2</span>
<div style="left:0;top:0;width:2018px;height:1438px;overflow:hidden">
<span class="t" style="left:2008.53px;top:73px;transform:scaleX(0.8700);">lc</span>
</div>
<div style="left:0;top:0;width:1990px;height:1438px;overflow:hidden">
<span class="t" style="left:1931.01px;top:591px;transform:scaleX(0.8700);">Sd Duration</span>
<span class="t" style="left:1923.32px;top:639px;color:#fff;transform:scaleX(0.8848);">18.913</span>
<span class="t" style="left:1923.90px;top:679px;transform:scaleX(0.8765);">20.585</span>
<span class="t" style="left:1923.32px;top:719px;transform:scaleX(0.8848);">18.033</span>
<span class="t" style="left:1924.17px;top:759px;transform:scaleX(0.8744);">31.189</span>
</div>
</div>
</body></html>
